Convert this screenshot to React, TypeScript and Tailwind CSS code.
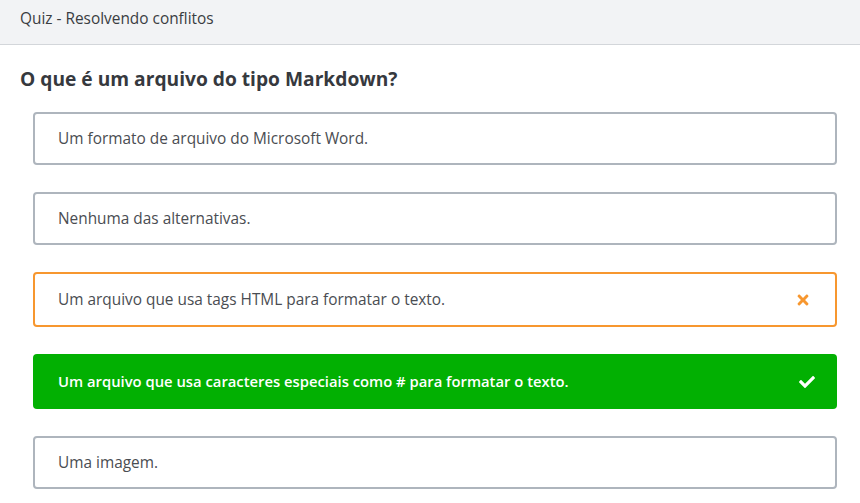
import { FaTimes, FaCheck } from "react-icons/fa";

type Option = {
  text: string;
  state: "idle" | "wrong" | "right";
};

const options: Option[] = [
  { text: "Um formato de arquivo do Microsoft Word.", state: "idle" },
  { text: "Nenhuma das alternativas.", state: "idle" },
  { text: "Um arquivo que usa tags HTML para formatar o texto.", state: "wrong" },
  { text: "Um arquivo que usa caracteres especiais como # para formatar o texto.", state: "right" },
  { text: "Uma imagem.", state: "idle" },
];

function OptionRow({ option }: { option: Option }) {
  if (option.state === "wrong") {
    return (
      <div className="flex h-[55px] items-center justify-between rounded-[4px] border-2 border-[#f7972f] bg-white pl-[23px] pr-[24px] text-[15.4px] text-[#4a4d52]">
        <span>{option.text}</span>
        <FaTimes className="h-[16px] w-[16px] text-[#f7972f]" />
      </div>
    );
  }
  if (option.state === "right") {
    return (
      <div className="flex h-[55px] items-center justify-between rounded-[4px] bg-[#02b002] pl-[25px] pr-[22px] text-[14.8px] font-semibold text-white">
        <span>{option.text}</span>
        <FaCheck className="h-[16px] w-[16px] text-white" />
      </div>
    );
  }
  return (
    <div className="flex h-[53px] items-center rounded-[4px] border-2 border-[#aeb5bd] bg-white pl-[23px] text-[15.4px] text-[#4a4d52]">
      <span>{option.text}</span>
    </div>
  );
}

export default function App() {
  return (
    <div className="min-h-screen w-full bg-white font-['Open_Sans',sans-serif]">
      {/* Header bar */}
      <div className="flex h-[45px] items-center border-b border-[#d3d6da] bg-[#f2f3f5] px-[20px] pb-[7px] text-[15.4px] text-[#3a3d42]">
        Quiz - Resolvendo conflitos
      </div>

      <div className="pl-[20px] pr-[23px] pt-[21px]">
        <h1 className="text-[19.2px] font-bold leading-[26px] text-[#36393e]">
          O que é um arquivo do tipo Markdown?
        </h1>

        <div className="mt-[20px] flex flex-col gap-[27px] pl-[13px]">
          {options.map((o, i) => (
            <OptionRow key={i} option={o} />
          ))}
        </div>
      </div>
    </div>
  );
}
